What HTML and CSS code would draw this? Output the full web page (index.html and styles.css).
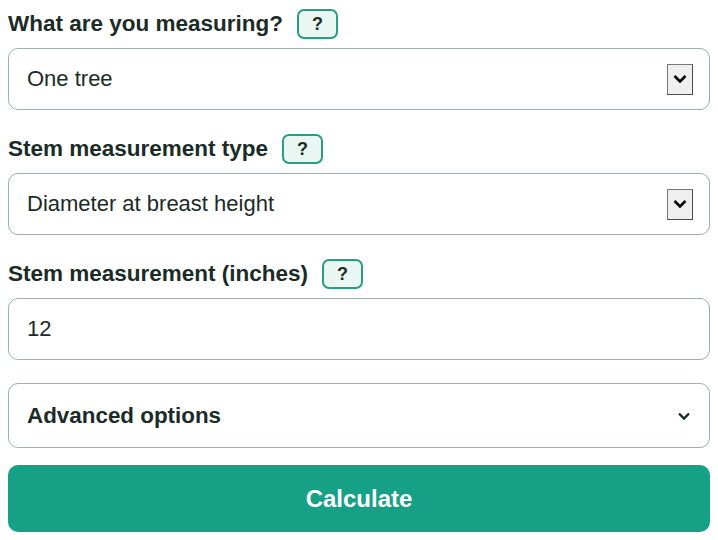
FILE: index.html
```html
<!DOCTYPE html>
<html lang="en">
<head>
<meta charset="utf-8">
<title>Tree calculator</title>
<link rel="stylesheet" href="styles.css">
</head>
<body>
<form class="calc">
  <div class="field">
    <div class="label-row"><label class="label">What are you measuring?</label><button type="button" class="help">?</button></div>
    <div class="select"><span class="select-text">One tree</span><span class="arrow-box"><svg width="14" height="10" viewBox="0 0 14 10"><path d="M1.5 2 L7 7.5 L12.5 2" fill="none" stroke="#000" stroke-width="2.6"/></svg></span></div>
  </div>
  <div class="field">
    <div class="label-row"><label class="label">Stem measurement type</label><button type="button" class="help">?</button></div>
    <div class="select"><span class="select-text">Diameter at breast height</span><span class="arrow-box"><svg width="14" height="10" viewBox="0 0 14 10"><path d="M1.5 2 L7 7.5 L12.5 2" fill="none" stroke="#000" stroke-width="2.6"/></svg></span></div>
  </div>
  <div class="field">
    <div class="label-row"><label class="label">Stem measurement (inches)</label><button type="button" class="help">?</button></div>
    <div class="input">12</div>
  </div>
  <div class="advanced"><span class="adv-text">Advanced options</span><svg width="14" height="10" viewBox="0 0 14 10"><path d="M2 2.5 L7 7.5 L12 2.5" fill="none" stroke="#1b2b27" stroke-width="2.4"/></svg></div>
  <button type="button" class="calculate">Calculate</button>
</form>
</body>
</html>
```

FILE: styles.css
```css
* { box-sizing: border-box; }
html, body { margin: 0; padding: 0; background: #fff; }
body {
  font-family: "Liberation Sans", Arial, sans-serif;
  color: #1b2b27;
  padding: 0 8px;
}
.calc { display: flex; flex-direction: column; padding-top: 9px; }
.field { display: flex; flex-direction: column; }
.field + .field { margin-top: 24px; }
.label-row { display: flex; align-items: center; height: 30px; margin-bottom: 9px; }
.label { font-weight: bold; font-size: 22.5px; color: #1b2b27; }
.help {
  margin-left: 14px;
  width: 41px; height: 30px;
  border: 2px solid #2a9d80;
  background: #e9f6f2;
  border-radius: 7px;
  font-family: "Liberation Sans", Arial, sans-serif;
  font-weight: bold; font-size: 18px; color: #1b2b27;
  padding: 0;
  display: flex; align-items: center; justify-content: center;
}
.select, .input, .advanced {
  height: 62px;
  border: 1.5px solid #9fb0a7;
  border-radius: 10px;
  background: #fff;
  display: flex; align-items: center;
  padding: 0 16px 0 18px;
  font-size: 22px;
  color: #1b2b27;
}
.select-text { flex: 1; }
.arrow-box {
  width: 26px; height: 31px;
  background: #efefef;
  border: 1px solid #767676;
  border-bottom-color: #4a4a4a; border-right-color: #4a4a4a;
  display: flex; align-items: center; justify-content: center;
}
.advanced {
  margin-top: 23px;
  height: 65px;
  padding: 0 18px 0 18px;
}
.adv-text { flex: 1; font-weight: bold; font-size: 22.4px; }
.calculate {
  margin-top: 17px;
  height: 67px;
  border: none;
  border-radius: 10px;
  background: #16a085;
  color: #fff;
  font-family: "Liberation Sans", Arial, sans-serif;
  font-weight: bold; font-size: 24px;
  cursor: pointer;
}
```
